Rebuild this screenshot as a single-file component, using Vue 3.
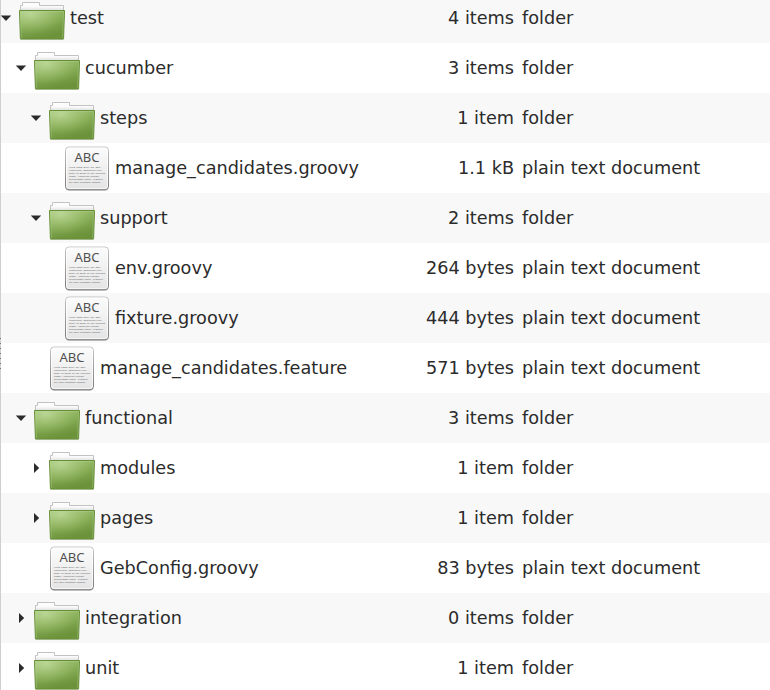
<script setup>
const rows = [
  { name: 'test', depth: 0, kind: 'folder', open: true, size: '4 items' },
  { name: 'cucumber', depth: 1, kind: 'folder', open: true, size: '3 items' },
  { name: 'steps', depth: 2, kind: 'folder', open: true, size: '1 item' },
  { name: 'manage_candidates.groovy', depth: 3, kind: 'text', size: '1.1 kB' },
  { name: 'support', depth: 2, kind: 'folder', open: true, size: '2 items' },
  { name: 'env.groovy', depth: 3, kind: 'text', size: '264 bytes' },
  { name: 'fixture.groovy', depth: 3, kind: 'text', size: '444 bytes' },
  { name: 'manage_candidates.feature', depth: 2, kind: 'text', size: '571 bytes' },
  { name: 'functional', depth: 1, kind: 'folder', open: true, size: '3 items' },
  { name: 'modules', depth: 2, kind: 'folder', open: false, size: '1 item' },
  { name: 'pages', depth: 2, kind: 'folder', open: false, size: '1 item' },
  { name: 'GebConfig.groovy', depth: 2, kind: 'text', size: '83 bytes' },
  { name: 'integration', depth: 1, kind: 'folder', open: false, size: '0 items' },
  { name: 'unit', depth: 1, kind: 'folder', open: false, size: '1 item' },
]
const lines = [
  'Lorem ipsum dolor sit amet,',
  'consectetur adipiscing elit.',
  'Donec at metus at est eleifend',
  'tempor. Phasellus blandit',
  'sollicitudin justo. Praesent,',
  'nec eget consequat sodales.',
]
</script>

<template>
  <div class="tree">
    <svg class="defs" width="0" height="0">
      <defs>
        <linearGradient id="body" x1="0" y1="0" x2="0.35" y2="1">
          <stop offset="0" stop-color="#a3c577" />
          <stop offset="0.5" stop-color="#86ac55" />
          <stop offset="1" stop-color="#6c933c" />
        </linearGradient>
        <radialGradient id="glow" cx="0.25" cy="0.1" r="0.75">
          <stop offset="0" stop-color="#c5dea2" stop-opacity="0.75" />
          <stop offset="1" stop-color="#a9cb7c" stop-opacity="0" />
        </radialGradient>
        <linearGradient id="back" x1="0" y1="0" x2="0" y2="1">
          <stop offset="0" stop-color="#ffffff" />
          <stop offset="0.5" stop-color="#fafafa" />
          <stop offset="1" stop-color="#dcdcdc" />
        </linearGradient>
        <linearGradient id="paper" x1="0" y1="0" x2="0" y2="1">
          <stop offset="0" stop-color="#fcfcfc" />
          <stop offset="1" stop-color="#e4e4e4" />
        </linearGradient>
        <linearGradient id="edge" x1="0" y1="0" x2="0" y2="1">
          <stop offset="0" stop-color="#c4c4c4" />
          <stop offset="1" stop-color="#777" />
        </linearGradient>
      </defs>
    </svg>
    <div class="grip"><i v-for="n in 7" :key="n"></i></div>
    <div v-for="row in rows" :key="row.name + row.depth" class="row">
      <div class="name" :style="{ paddingLeft: row.depth * 15 + 'px' }">
        <span class="caret">
          <svg v-if="row.kind === 'folder'" width="12" height="12" viewBox="0 0 12 12">
            <path v-if="row.open" d="M0.8 3.5H11.2L6 9Z" fill="#2b2b2b" />
            <path v-else d="M4 1V11L9.2 6Z" fill="#2b2b2b" />
          </svg>
        </span>
        <svg v-if="row.kind === 'folder'" class="icon" viewBox="0 0 48 48">
          <rect x="2" y="45" width="44" height="1" fill="#000" opacity="0.12" />
          <path d="M2.5 17V11.5H4.5V8.5H21.5V11.5H45.5V17Z" fill="url(#back)" stroke="#c2c2c2" stroke-linejoin="round" />
          <path d="M1.5 16.5H46.5L45.6 44.5Q45.6 45 45 45H3Q2.4 45 2.4 44.5Z" fill="url(#body)" stroke="#658f35" />
          <path d="M2 17H46L45 44.5H3Z" fill="url(#glow)" />
          <path d="M3.4 44L2.6 17.5H45.4L44.6 44" fill="none" stroke="#c3dba4" opacity="0.3" />
        </svg>
        <svg v-else class="icon" viewBox="0 0 48 48">
          <rect x="2.5" y="4" width="43" height="43" rx="4" fill="#000" opacity="0.2" />
          <rect x="2.5" y="3" width="43" height="42.7" rx="3.5" fill="url(#paper)" stroke="url(#edge)" />
          <rect x="3.5" y="4" width="41" height="40.6" rx="2.6" fill="none" stroke="#fff" opacity="0.7" />
          <text x="24" y="18" class="abc" text-anchor="middle" textLength="25">ABC</text>
          <text v-for="(l, i) in lines" :key="i" class="tiny" x="6" :y="24 + i * 3">{{ l }}</text>
        </svg>
        <span class="label">{{ row.name }}</span>
      </div>
      <div class="size">{{ row.size }}</div>
      <div class="type">{{ row.kind === 'folder' ? 'folder' : 'plain text document' }}</div>
    </div>
  </div>
</template>

<style>
html, body { overflow: hidden; background: #fff; }
</style>

<style scoped>
.tree {
  position: relative;
  box-sizing: border-box;
  width: 770px;
  height: 690px;
  overflow: hidden;
  padding-left: 1px;
  background: #cfcfcf;
  font: 17.66px/50px "DejaVu Sans", sans-serif;
  color: #2b2b2b;
}
.defs { position: absolute; }
.row {
  display: grid;
  grid-template-columns: 413px 100px 1fr;
  height: 50px;
  white-space: pre;
  background: #fff;
}
.row:nth-of-type(even) { background: #f8f8f8; }
.grip + .row { margin-top: -7px; }
.name { display: flex; align-items: flex-start; }
.caret { display: flex; width: 17px; height: 50px; align-items: center; }
.caret svg { margin-left: -1px; }
.icon { width: 48px; height: 48px; margin: 1px 4px 0 0; flex: none; }
.size { text-align: right; }
.type { padding-left: 8px; }
.abc { font: 13px "Noto Sans", sans-serif; fill: #505050; }
.tiny { font: bold 2px "Liberation Mono", monospace; fill: #777; }
.grip {
  position: absolute;
  left: 0;
  top: 338px;
  display: flex;
  flex-direction: column;
  gap: 4px;
}
.grip i { width: 1px; height: 1px; background: #777; }
</style>
